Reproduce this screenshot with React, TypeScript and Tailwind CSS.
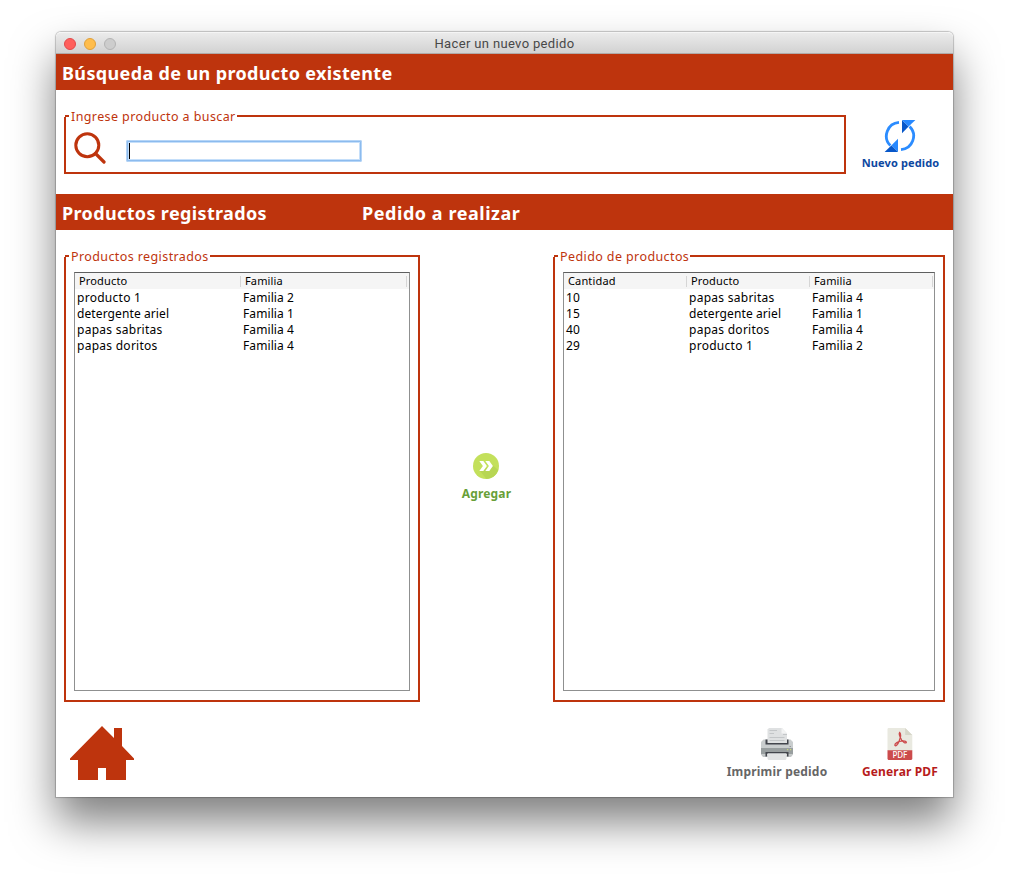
import type { ReactNode } from "react";

const productos = [
  ["producto 1", "Familia 2"],
  ["detergente ariel", "Familia 1"],
  ["papas sabritas", "Familia 4"],
  ["papas doritos", "Familia 4"],
];

const pedido = [
  ["10", "papas sabritas", "Familia 4"],
  ["15", "detergente ariel", "Familia 1"],
  ["40", "papas doritos", "Familia 4"],
  ["29", "producto 1", "Familia 2"],
];

function Panel({ title, className, children }: { title: string; className: string; children: ReactNode }) {
  return (
    <section className={`flex flex-col text-[#be340d] ${className}`}>
      <div className="flex h-[14px] items-start">
        <div className="mt-[6px] flex h-2 w-[5px] shrink-0 flex-col">
          <div className="ml-px h-[2px] bg-[#be340d]" />
          <div className="h-[6px] w-[2px] bg-[#be340d]" />
        </div>
        <h2 className="ml-[2px] text-[12.5px] leading-[15px] tracking-[0.4px] whitespace-nowrap">{title}</h2>
        <div className="mt-[6px] ml-px h-2 grow border-t-2 border-r-2 border-[#be340d]" />
      </div>
      <div className="flex min-h-0 grow flex-col border-x-2 border-b-2 border-[#be340d]">{children}</div>
    </section>
  );
}

function Table({ columns, rows, colClass }: { columns: string[]; rows: string[][]; colClass: string }) {
  return (
    <div className="mx-2 mt-[9px] mb-[9px] grow border border-[#8f9090] border-t-[#5e5f5f] text-black">
      <div className="flex h-4 bg-[#f5f5f5]">
        {columns.map((c) => (
          <div key={c} className={`flex h-4 shrink-0 pl-1 ${colClass}`}>
            <span className="grow text-[11px] leading-4 tracking-[0.15px]">{c}</span>
            <span className="mt-[3px] h-[11px] w-px bg-[#d6d6d6]" />
          </div>
        ))}
      </div>
      {rows.map((r, i) => (
        <div key={i} className="flex h-4">
          {r.map((v, j) => (
            <span
              key={j}
              className={`shrink-0 pl-[2px] text-[12px] leading-[17px] whitespace-nowrap ${
                v.startsWith("papas") || v.startsWith("producto") ? "tracking-[0.27px]" : "tracking-[0.1px]"
              } ${colClass}`}
            >
              {v}
            </span>
          ))}
        </div>
      ))}
    </div>
  );
}

function SearchIcon() {
  return (
    <svg className="h-8 w-8" viewBox="0 0 32 32" fill="none" stroke="#be340d">
      <circle cx="13.3" cy="13.2" r="11.5" strokeWidth="3" />
      <path d="M21.5 21.5 30 30" strokeWidth="3.2" strokeLinecap="round" />
    </svg>
  );
}

function RefreshIcon() {
  return (
    <svg className="h-8 w-8" viewBox="0 0 32 32">
      <g fill="none" stroke="#2b8cff" strokeWidth="2.8">
        <path d="M15 2.43A13.6 13.6 0 0 0 6.4 25.6" />
        <path d="M25.6 6.4A13.6 13.6 0 0 1 17 29.57" />
      </g>
      <path fill="#0757c9" d="M18 0v13.2L24.6 6.6z" />
      <path fill="#2688ff" d="M18 0h13.4L24.6 6.6z" />
      <path fill="#2688ff" d="M14 18.8V32L7.3 25.4z" />
      <path fill="#0757c9" d="M.6 32H14L7.3 25.4z" />
    </svg>
  );
}

function AddIcon() {
  return (
    <svg className="h-[26px] w-[26px]" viewBox="0 0 26 26">
      <circle cx="13" cy="13" r="13" fill="#c3e05b" />
      <path d="M20 12.5 25.3 17A13 13 0 0 1 13.5 26L7 18z" fill="#b7d653" />
      <path d="M6.300 8h4l3.600 5-3.600 5h-4l3.600-5zM12.300 8h4l3.600 5-3.600 5h-4l3.600-5z" fill="#fff" />
    </svg>
  );
}

function HomeIcon() {
  return (
    <svg className="h-[54px] w-16" viewBox="0 0 64 54">
      <path fill="#be340d" d="M32 0 44 12V2h8v18l12 12.500V34h-8v20H36V42h-8v12H8V34H0v-1.500z" />
    </svg>
  );
}

function PrinterIcon() {
  return (
    <svg className="h-8 w-8" viewBox="0 0 32 32">
      <path fill="#c9cdce" d="M2.500 11.500h27l2.500 2.500v6H0v-6z" />
      <path fill="#42454c" d="M4.500 11.500H7V15h18v-3.500h2.500v5h-23z" />
      <path fill="#dfe1e2" d="M6.500 1.500 8 0h13l5 5.500V15H6.500z" />
      <path fill="#f3f4f4" d="M20.500 0v5.500H26z" />
      <path
        fill="#c3c6c8"
        d="M8.500 2h7.500v1H8.500zM8.500 5h4.500v1H8.500zM8.500 9h15v1h-15zM8.500 12h15v1h-15zM22 6h4v1h-4z"
      />
      <path fill="#989e9f" d="M0 20h32v6.500h-6.500v-2h-19v2H0z" />
      <path fill="#c1c5c6" d="M0 26.500h32L30 29H2z" />
      <path fill="#42454c" d="M4.500 24h23v4.500H26V26H6v2.500H4.500z" />
      <path fill="#e1e3e4" d="M6.500 25.200h19V31l-1 1h-17l-1-1z" />
      <path fill="#cbd77b" d="M26 21h1.200v1.200H26zM29 21h1.200v1.200H29z" />
      <path fill="#959a9c" d="M28.500 18H30v1h-1.500z" />
    </svg>
  );
}

function PdfIcon() {
  return (
    <svg className="h-8 w-[26px]" viewBox="0 0 26 32">
      <path fill="#e9e9e0" d="M1.300 0h16.900l7.100 7v16H.5V.8z" />
      <path fill="#d6d6c8" d="M18.200 0v7h7.100z" />
      <path
        fill="none"
        stroke="#cc4b4c"
        strokeWidth="1.300"
        strokeLinecap="round"
        d="M12.700 4.500c-1.500 1.500.5 5 2 7.500 1.300 2 3.500 3.800 4.600 2.500.6-1.400-3-1.700-5.300-1.300-2.800.4-6.300 2.200-6.200 4 .5 1.800 3-.5 4.200-3.700 1.200-3 2.400-7.500.7-9z"
      />
      <path fill="#cc4b4c" d="M.5 22.300h24.800V31l-1 1H1.300l-.8-1z" />
      <text x="12.900" y="30.300" textAnchor="middle" fill="#fff" fontSize="8" fontWeight="500" fontFamily="Noto Sans" textLength="15">
        PDF
      </text>
    </svg>
  );
}

export default function App() {
  return (
    <div className="h-[877px] w-[1009px] overflow-hidden bg-white pt-8 pl-14 font-['Noto_Sans',sans-serif]">
      <main className="flex h-[765px] w-[897px] flex-col rounded-t-[5px] bg-white shadow-[0_0_1px_1px_rgba(0,0,0,0.22),0_25px_44px_rgba(0,0,0,0.5)]">
        <header className="grid h-[22px] shrink-0 grid-cols-[1fr_auto_1fr] items-center rounded-t-[5px] border-t border-b border-t-[#f5f5f5] border-b-[#b0aaa8] bg-linear-to-b from-[#ebebeb] to-[#d2d2d2] px-2">
          <div className="flex gap-2">
            <span className="h-3 w-3 rounded-full border border-[#e2494a] bg-[#ff5f5c]" />
            <span className="h-3 w-3 rounded-full border border-[#e0a03a] bg-[#ffbd4c]" />
            <span className="h-3 w-3 rounded-full border border-[#b4b4b4] bg-[#cdcdcd]" />
          </div>
          <h1 className="pt-px font-['Roboto',sans-serif] text-[13px] leading-5 tracking-[0.35px] text-[#484848]">
            Hacer un nuevo pedido
          </h1>
        </header>

        <div className="flex h-9 shrink-0 items-center bg-[#be340d] pt-[2px] pl-[6px] text-[18px] font-bold tracking-[0.36px] text-white">
          <span>Búsqueda de un producto existente</span>
        </div>

        <div className="flex h-[104px] shrink-0 pl-2">
          <Panel title="Ingrese producto a buscar" className="mt-[19px] h-[65px] w-[782px]">
            <div className="flex pt-[9px] pl-2">
              <SearchIcon />
              <div className="mt-[8px] ml-5 flex h-[22px] w-[236px] items-center rounded-[2px] border-2 border-[#8cbbee] bg-white shadow-[inset_0_0_0_1px_#c5dffa] outline-1 -outline-offset-1 outline-[#b5d5f7]">
                <span className="ml-px h-4 w-px bg-black" />
              </div>
            </div>
          </Panel>
          <button className="mt-[30px] ml-[15px] flex w-[79px] flex-col items-center self-start text-[11px] leading-4 font-bold tracking-[0.12px] whitespace-nowrap text-[#0d47a1]">
            <span className="mr-px">
              <RefreshIcon />
            </span>
            <span className="mt-[3px]">Nuevo pedido</span>
          </button>
        </div>

        <div className="flex h-9 shrink-0 items-center bg-[#be340d] pt-[2px] pl-[6px] text-[18px] font-bold tracking-[0.36px] text-white">
          <span className="w-[300px]">Productos registrados</span>
          <span className="tracking-[0.55px]">Pedido a realizar</span>
        </div>

        <div className="flex h-[472px] shrink-0 pt-[19px] pl-2">
          <Panel title="Productos registrados" className="w-[356px]">
            <Table columns={["Producto", "Familia"]} rows={productos} colClass="w-[166px]" />
          </Panel>
          <div className="flex w-[133px] justify-center">
            <button className="mt-[204px] flex flex-col items-center self-start text-[12px] leading-4 font-bold tracking-[0.15px] text-[#689f38]">
              <span className="mr-px">
                <AddIcon />
              </span>
              <span className="mt-[7px]">Agregar</span>
            </button>
          </div>
          <Panel title="Pedido de productos" className="w-[392px]">
            <Table columns={["Cantidad", "Producto", "Familia"]} rows={pedido} colClass="w-[123px]" />
          </Panel>
        </div>

        <footer className="flex grow items-start pl-[14px]">
          <div className="mt-6">
            <HomeIcon />
          </div>
          <button className="mt-[26px] ml-[592px] flex w-[102px] flex-col items-center text-[12px] leading-4 font-bold tracking-[0.2px] whitespace-nowrap text-[#666]">
            <PrinterIcon />
            <span className="mt-1">Imprimir pedido</span>
          </button>
          <button className="mt-[26px] ml-[33px] flex w-[78px] flex-col items-center text-[12px] leading-4 font-bold tracking-[0.15px] whitespace-nowrap text-[#b71c1c]">
            <PdfIcon />
            <span className="mt-1">Generar PDF</span>
          </button>
        </footer>
      </main>
    </div>
  );
}
